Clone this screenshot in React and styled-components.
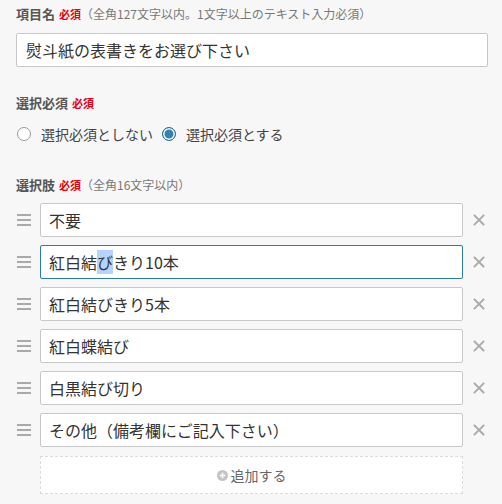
import React, { useEffect, useRef } from "react";
import styled, { createGlobalStyle } from "styled-components";

const GlobalStyle = createGlobalStyle`
  html, body {
    margin: 0;
    padding: 0;
    background: #f7f7f7;
  }
  body {
    font-family: "Noto Sans CJK JP", "Noto Sans", sans-serif;
    color: #333;
  }
  input::selection {
    background: #b3d4fc;
    color: #333;
  }
`;

const options = [
  "不要",
  "紅白結びきり10本",
  "紅白結びきり5本",
  "紅白蝶結び",
  "白黒結び切り",
  "その他（備考欄にご記入下さい）",
];

function App() {
  const focusRef = useRef(null);

  useEffect(() => {
    if (focusRef.current) {
      focusRef.current.focus();
      focusRef.current.setSelectionRange(3, 4);
    }
  }, []);

  return (
    <Page>
      <GlobalStyle />
      <Label>
        項目名<Required>必須</Required>
        <Hint>（全角127文字以内。1文字以上のテキスト入力必須）</Hint>
      </Label>
      <TextField defaultValue="熨斗紙の表書きをお選び下さい" />

      <Label $top={26}>
        選択必須<Required>必須</Required>
      </Label>
      <RadioRow>
        <RadioItem>
          <RadioDot />
          選択必須としない
        </RadioItem>
        <RadioItem>
          <RadioDot $checked />
          選択必須とする
        </RadioItem>
      </RadioRow>

      <Label $top={31}>
        選択肢<Required>必須</Required>
        <Hint>（全角16文字以内）</Hint>
      </Label>
      <OptionList>
        {options.map((text, i) => (
          <OptionRow key={i}>
            <Handle>
              <span />
              <span />
              <span />
            </Handle>
            <OptionField
              defaultValue={text}
              ref={i === 1 ? focusRef : null}
              $focused={i === 1}
            />
            <Remove>
              <svg width="12" height="12" viewBox="0 0 12 12">
                <path
                  d="M1.5 1.5 L10.5 10.5 M10.5 1.5 L1.5 10.5"
                  stroke="#aaa"
                  strokeWidth="1.8"
                  strokeLinecap="square"
                />
              </svg>
            </Remove>
          </OptionRow>
        ))}
        <AddRow>
          <Spacer />
          <AddButton>
            <svg width="11" height="11" viewBox="0 0 12 12">
              <circle cx="6" cy="6" r="6" fill="#c4c4c4" />
              <path d="M6 3 V9 M3 6 H9" stroke="#fff" strokeWidth="1.8" />
            </svg>
            追加する
          </AddButton>
          <Spacer $w={25} />
        </AddRow>
      </OptionList>
    </Page>
  );
}

const Page = styled.div`
  padding: 4px 14px 20px 16px;
`;

const Label = styled.div`
  display: flex;
  align-items: baseline;
  margin-top: ${(p) => p.$top || 0}px;
  height: 20px;
  line-height: 20px;
  font-size: 13px;
  font-weight: 700;
  color: #555;
`;

const Required = styled.span`
  margin-left: 4px;
  font-size: 11px;
  font-weight: 700;
  color: #e60012;
`;

const Hint = styled.span`
  font-size: 12px;
  font-weight: 400;
  color: #777;
`;

const TextField = styled.input`
  display: block;
  box-sizing: border-box;
  width: 100%;
  height: 34px;
  margin-top: 9px;
  padding: 0 9px;
  border: 1px solid #c8c8c8;
  border-radius: 2px;
  background: #fff;
  font-family: inherit;
  font-size: 16px;
  color: #333;
  outline: none;
`;

const RadioRow = styled.div`
  display: flex;
  align-items: center;
  gap: 9px;
  margin-top: 11px;
  height: 20px;
  padding-left: 1px;
`;

const RadioItem = styled.label`
  display: flex;
  align-items: center;
  gap: 10px;
  font-size: 14px;
  color: #444;
`;

const RadioDot = styled.span`
  display: inline-block;
  box-sizing: border-box;
  width: 14px;
  height: 14px;
  border-radius: 50%;
  border: 1px solid ${(p) => (p.$checked ? "#2a7099" : "#9a9a9a")};
  background: ${(p) => (p.$checked ? "#3383ab" : "#fff")};
  box-shadow: ${(p) => (p.$checked ? "inset 0 0 0 1.5px #fff" : "none")};
`;

const OptionList = styled.div`
  display: flex;
  flex-direction: column;
  gap: 8px;
  margin-top: 8px;
`;

const OptionRow = styled.div`
  display: flex;
  align-items: center;
  height: 34px;
`;

const Handle = styled.div`
  display: flex;
  flex-direction: column;
  gap: 3px;
  width: 24px;
  padding-left: 1px;
  box-sizing: border-box;

  span {
    display: block;
    width: 14px;
    height: 2px;
    background: #aaa;
  }
`;

const OptionField = styled(TextField)`
  flex: 1;
  width: auto;
  margin-top: 0;
  padding: 0 8px;
  border-color: ${(p) => (p.$focused ? "#2b7ca1" : "#c8c8c8")};
`;

const Remove = styled.div`
  display: flex;
  align-items: center;
  justify-content: center;
  width: 25px;
  height: 34px;
  padding-left: 6px;
  box-sizing: border-box;
`;

const AddRow = styled.div`
  display: flex;
  margin-top: 1px;
`;

const Spacer = styled.div`
  width: ${(p) => p.$w || 24}px;
  flex-shrink: 0;
`;

const AddButton = styled.div`
  flex: 1;
  display: flex;
  align-items: center;
  justify-content: center;
  gap: 3px;
  height: 38px;
  box-sizing: border-box;
  border: 1px dashed #dcdcdc;
  background: #fff;
  font-size: 14px;
  color: #666;
`;

export default App;
